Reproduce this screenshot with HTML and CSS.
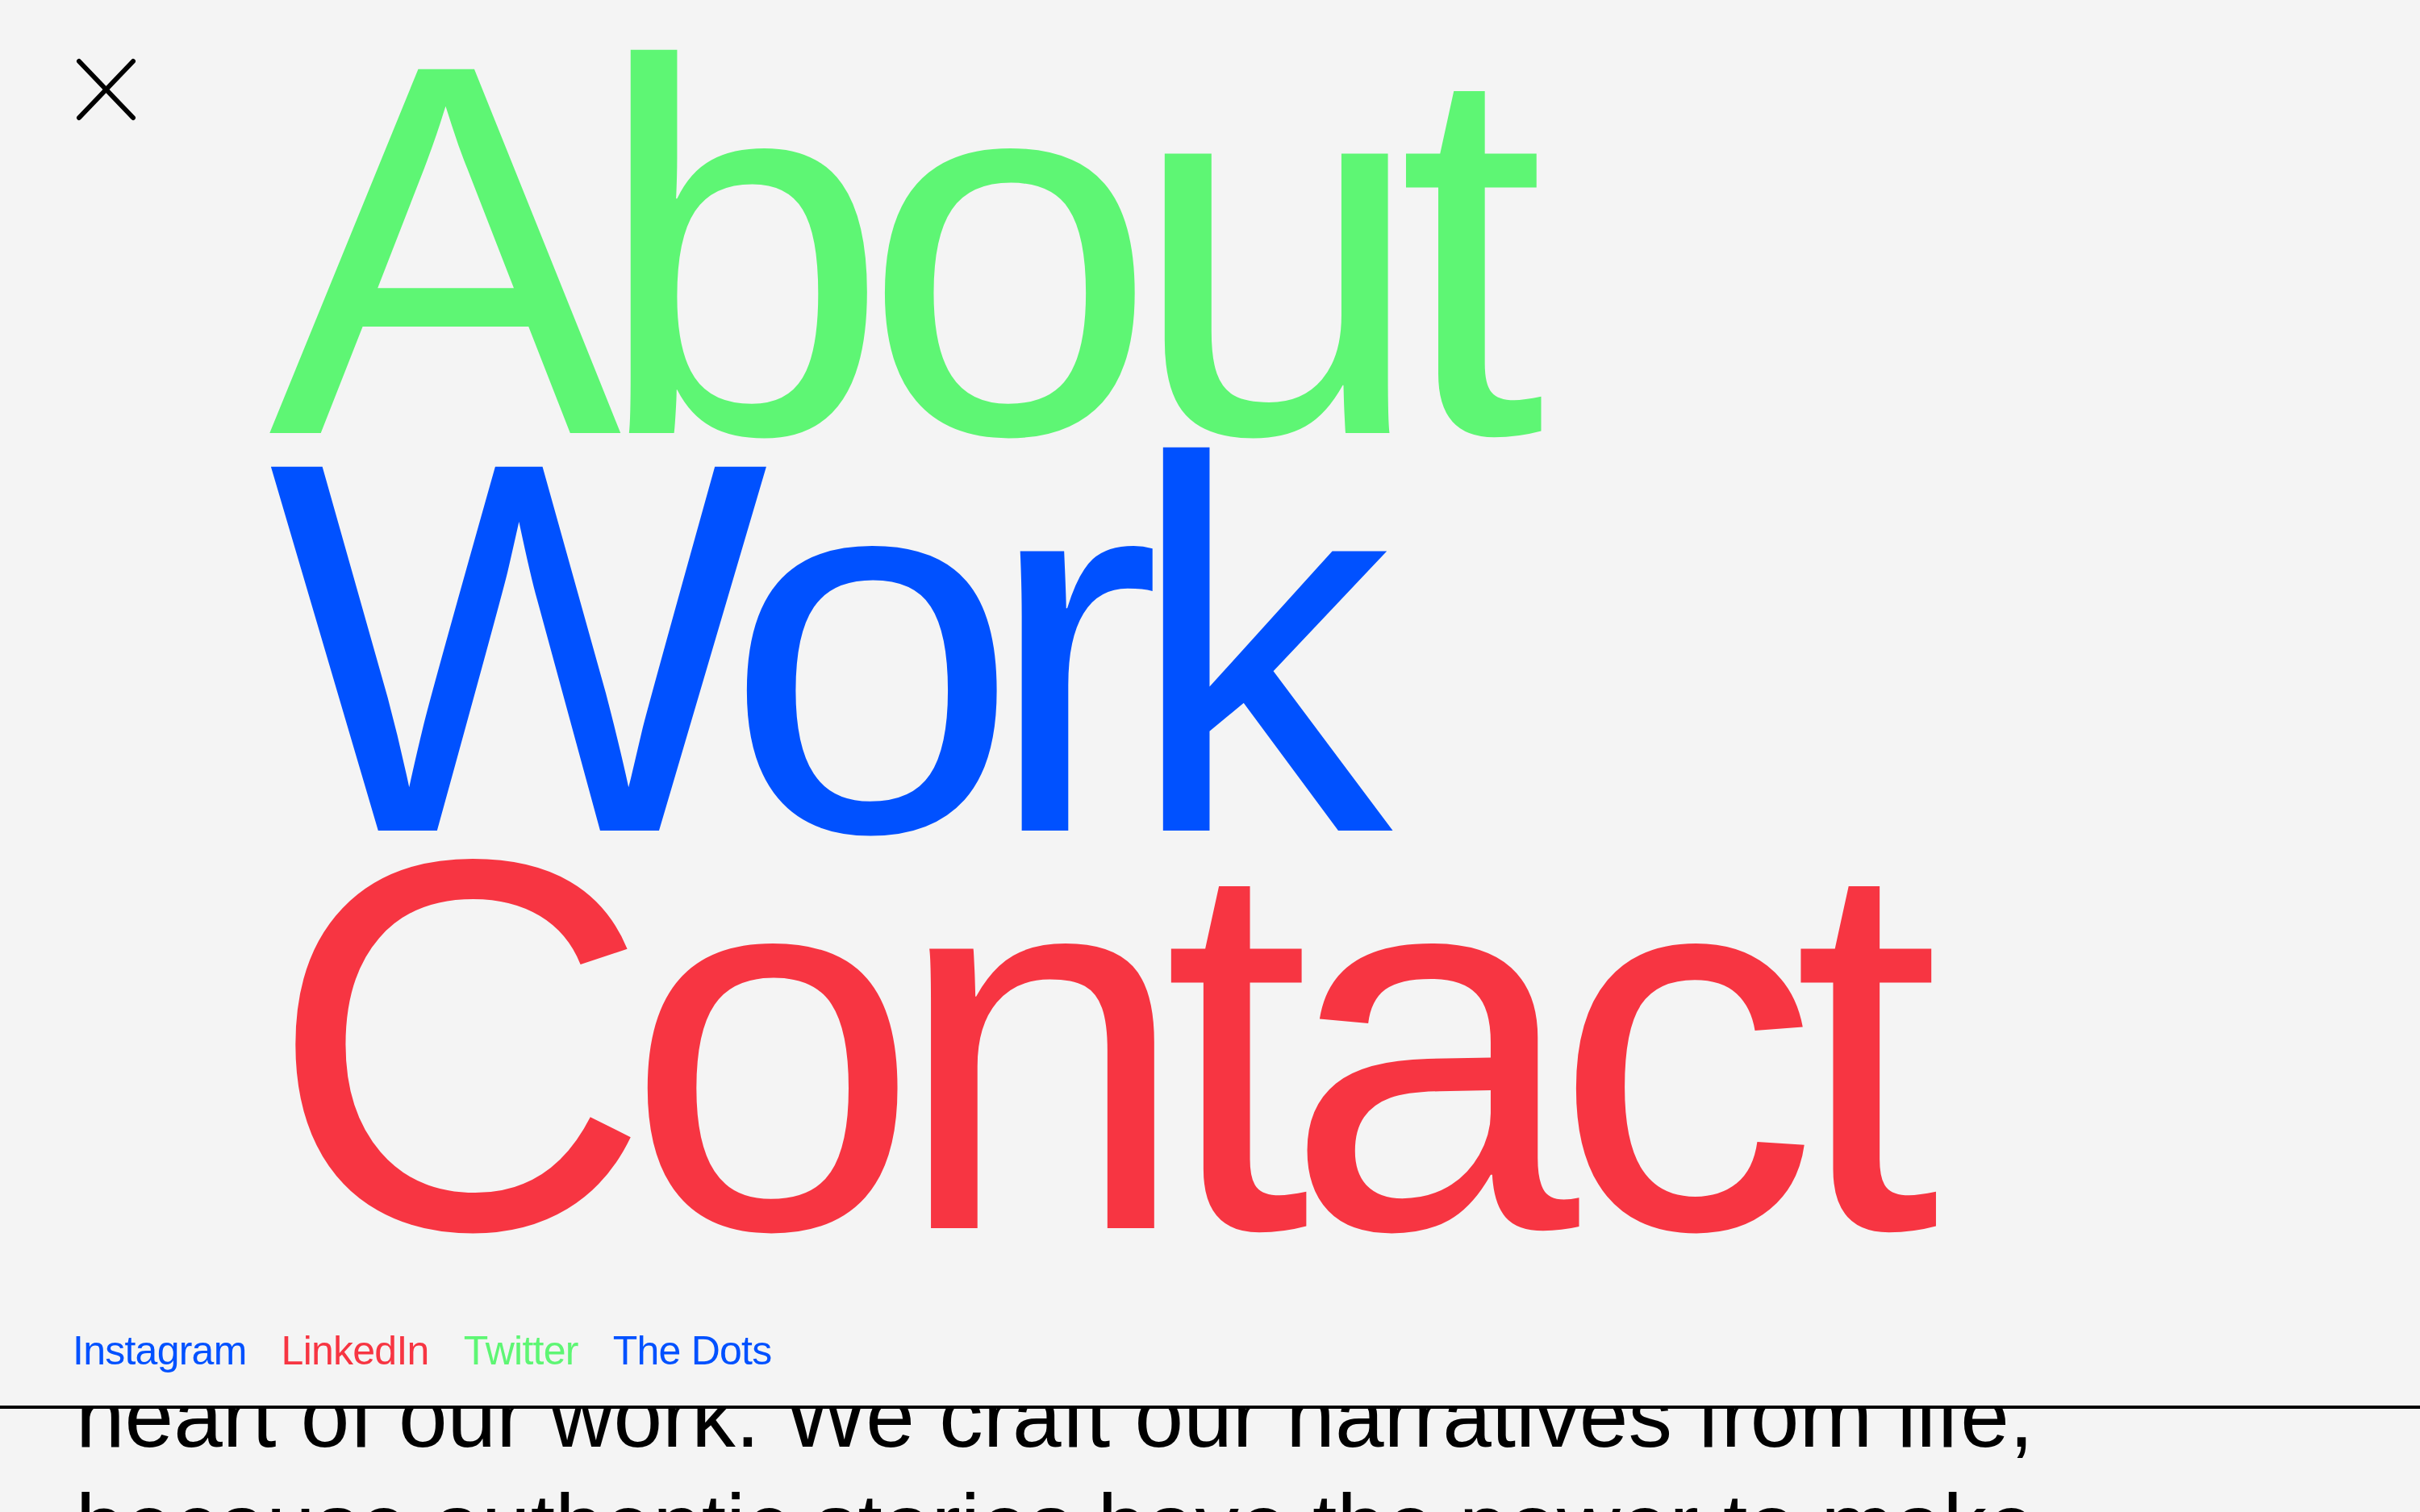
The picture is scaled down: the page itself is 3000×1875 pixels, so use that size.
FILE: index.html
```html
<!DOCTYPE html>
<html lang="en">
<head>
<meta charset="utf-8">
<title>Menu</title>
<link rel="stylesheet" href="styles.css">
</head>
<body>
<main class="page">
  <p class="intro">heart of our work. We craft our narratives from life,<br>because authentic stories have the power to make</p>
</main>
<div class="menu">
  <div class="menu-top">
    <button class="close" aria-label="Close menu">
      <svg viewBox="0 0 80 80" width="80" height="80">
        <line x1="8" y1="6" x2="75" y2="76" />
        <line x1="75" y1="6" x2="8" y2="76" />
      </svg>
    </button>
    <nav class="nav">
      <a class="nav-link green" href="#">About</a>
      <a class="nav-link blue tight" href="#">Work</a>
      <a class="nav-link red loose" href="#">Contact</a>
    </nav>
  </div>
  <div class="socials">
    <a class="social blue" href="#">Instagram</a>
    <a class="social red" href="#">LinkedIn</a>
    <a class="social green" href="#">Twitter</a>
    <a class="social blue" href="#">The Dots</a>
  </div>
</div>
</body>
</html>
```
FILE: styles.css
```css
html, body {
  margin: 0;
  padding: 0;
  background: #f4f4f4;
  font-family: "Liberation Sans", Arial, Helvetica, sans-serif;
  overflow: hidden;
}

.page {
  padding: 1689px 90px 0 94px;
}

.intro {
  margin: 0;
  font-size: 109px;
  line-height: 135px;
  color: #000;
  white-space: nowrap;
}

.menu {
  position: fixed;
  top: 0;
  left: 0;
  right: 0;
  height: 1743px;
  border-bottom: 4px solid #000;
  background: #f4f4f4;
  display: flex;
  flex-direction: column;
  z-index: 10;
}

.menu-top {
  display: flex;
  padding: 63px 90px 0;
}

.close {
  width: 80px;
  height: 80px;
  margin-top: 7px;
  padding: 0;
  border: 0;
  background: none;
  flex: none;
}

.close svg {
  display: block;
}

.close line {
  stroke: #000;
  stroke-width: 6;
  stroke-linecap: round;
}

.nav {
  margin-left: 163px;
  display: flex;
  flex-direction: column;
}

.nav-link {
  display: block;
  font-size: 656px;
  line-height: 493px;
  letter-spacing: -33px;
  text-decoration: none;
  white-space: nowrap;
}

.nav-link.tight {
  letter-spacing: -42px;
}

.nav-link.loose {
  letter-spacing: -31.5px;
}

.socials {
  margin-top: auto;
  display: flex;
  gap: 43px;
  padding: 0 90px 38px;
}

.social {
  font-size: 50px;
  line-height: 60px;
  letter-spacing: -0.75px;
  text-decoration: none;
}

.green { color: #5ef674; }
.blue { color: #0051ff; }
.red { color: #f73542; }
```
